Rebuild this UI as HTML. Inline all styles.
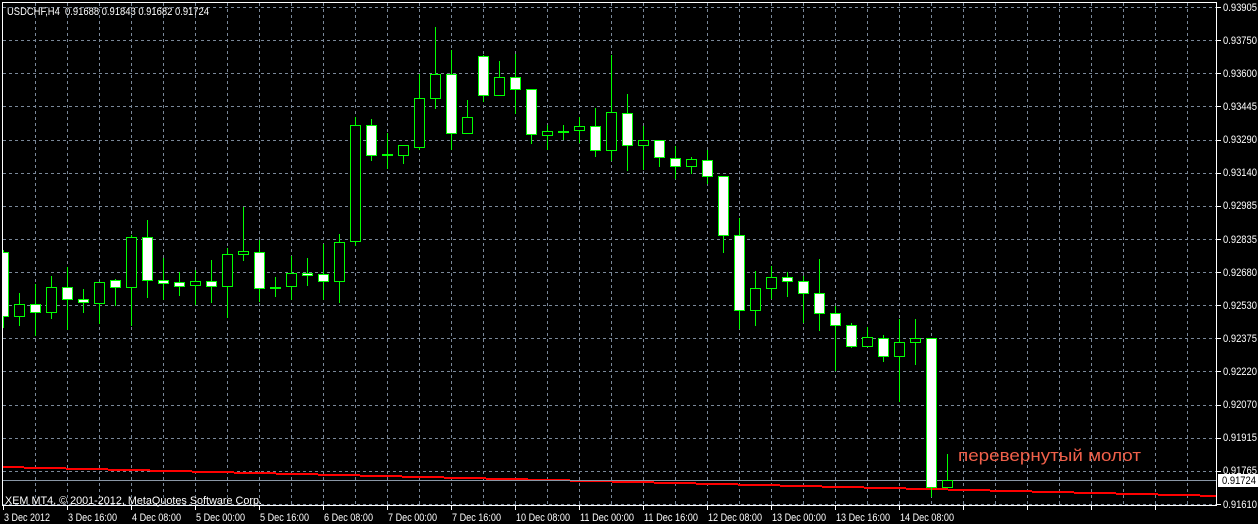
<!DOCTYPE html>
<html><head><meta charset="utf-8">
<style>
html,body{margin:0;padding:0;background:#000;}
body{width:1258px;height:524px;overflow:hidden;}
svg{display:block;}
text{font-family:"Liberation Sans",Arial,sans-serif;}
</style></head>
<body>
<svg id="s" width="1258" height="524" xmlns="http://www.w3.org/2000/svg" shape-rendering="crispEdges">
<rect width="1258" height="524" fill="#000"/>
<g id="grid" stroke="#7a8899" stroke-width="1" stroke-dasharray="3,3"></g>
<g id="red" stroke="#ff0000" stroke-width="2" fill="none"></g>
<line x1="2" y1="480.5" x2="1217" y2="480.5" stroke="#8a97a6" stroke-width="1"/>
<g id="candles"></g>
<rect x="2.5" y="2.5" width="1214" height="503" fill="none" stroke="#fff" stroke-width="1"/>
<g id="ticks" stroke="#fff" stroke-width="1"></g>
<rect x="1218" y="474" width="40" height="13" fill="#fff"/>
<g font-size="11" fill="#fff" lengthAdjust="spacingAndGlyphs">
<text x="7" y="15" textLength="202" lengthAdjust="spacingAndGlyphs">USDCHF,H4&#160;&#160;0.91688 0.91843 0.91682 0.91724</text>
<text x="5" y="504" textLength="257" lengthAdjust="spacingAndGlyphs">XEM MT4, © 2001-2012, MetaQuotes Software Corp.</text>
</g>
<g id="prices" font-size="11" fill="#fff">
<text x="1223" y="11">0.93905</text>
<text x="1223" y="44">0.93750</text>
<text x="1223" y="77">0.93600</text>
<text x="1223" y="110">0.93445</text>
<text x="1223" y="143">0.93290</text>
<text x="1223" y="176">0.93140</text>
<text x="1223" y="209">0.92985</text>
<text x="1223" y="243">0.92835</text>
<text x="1223" y="276">0.92680</text>
<text x="1223" y="309">0.92530</text>
<text x="1223" y="342">0.92375</text>
<text x="1223" y="375">0.92220</text>
<text x="1223" y="408">0.92070</text>
<text x="1223" y="441">0.91915</text>
<text x="1223" y="474">0.91765</text>
<text x="1223" y="508">0.91610</text>
<text x="1222" y="484" fill="#000">0.91724</text>
</g>
<g id="dates" font-size="11" fill="#fff">
<text x="4" y="521">3 Dec 2012</text>
<text x="68" y="521">3 Dec 16:00</text>
<text x="132" y="521">4 Dec 08:00</text>
<text x="196" y="521">5 Dec 00:00</text>
<text x="260" y="521">5 Dec 16:00</text>
<text x="324" y="521">6 Dec 08:00</text>
<text x="388" y="521">7 Dec 00:00</text>
<text x="452" y="521">7 Dec 16:00</text>
<text x="516" y="521">10 Dec 08:00</text>
<text x="580" y="521">11 Dec 00:00</text>
<text x="644" y="521">11 Dec 16:00</text>
<text x="708" y="521">12 Dec 08:00</text>
<text x="772" y="521">13 Dec 00:00</text>
<text x="836" y="521">13 Dec 16:00</text>
<text x="900" y="521">14 Dec 08:00</text>
</g>
<text x="958" y="461" font-size="17" fill="#f0604a" textLength="183" lengthAdjust="spacingAndGlyphs">перевернутый молот</text>
</svg>
<script>
var NS="http://www.w3.org/2000/svg";
function el(p,n,a){var e=document.createElementNS(NS,n);for(var k in a)e.setAttribute(k,a[k]);p.appendChild(e);return e;}
var ps=document.getElementById("prices").children;
for(var i=0;i<ps.length;i++){ps[i].setAttribute("textLength","34");ps[i].setAttribute("lengthAdjust","spacingAndGlyphs");}
var ds=document.getElementById("dates").children;
for(var i=0;i<ds.length;i++){var L=ds[i].textContent.length;ds[i].setAttribute("textLength",L>=12?"54":(L==11?"49":"46"));ds[i].setAttribute("lengthAdjust","spacingAndGlyphs");}
var g=document.getElementById("grid");
for(var k=0;k<16;k++){var y=Math.round(7+k*33.13)+0.5;el(g,"line",{x1:3,y1:y,x2:1216,y2:y});}
for(var x=35;x<1216;x+=32){el(g,"line",{x1:x+0.5,y1:3,x2:x+0.5,y2:505});}
var t=document.getElementById("ticks");
for(var k=0;k<16;k++){var y=Math.round(7+k*33.13)+0.5;el(t,"line",{x1:1217,y1:y,x2:1221,y2:y});}
for(var x=3;x<1216;x+=64){el(t,"line",{x1:x+0.5,y1:506,x2:x+0.5,y2:510});}
var r=document.getElementById("red");
var d="";var xs=3,k=0;
while(xs<1216){var xe=Math.min(24+42*k,1216);var y=467+k;d+="M"+xs+" "+y+"H"+xe;xs=xe;k++;}
el(r,"path",{d:d});
var C=[
[250,252,316,327,1],[293,304,316,325,0],[284,304,312,335,1],[276,287,312,318,0],
[267,287,299,329,1],[289,299,302,312,1],[282,282,303,323,0],[279,280,287,305,1],
[235,237,287,325,0],[220,237,280,297,1],[258,280,283,299,1],[272,282,286,295,1],
[270,281,285,304,0],[260,281,286,302,1],[248,254,286,317,0],[207,251,254,260,0],
[240,252,288,301,1],[277,287,288,296,0],[256,273,286,299,0],[258,273,275,285,1],
[244,274,281,299,1],[234,242,281,302,0],[117,125,241,245,0],[119,125,155,160,1],
[133,154,155,168,0],[145,145,155,163,0],[74,98,147,149,0],[27,74,98,108,0],
[50,74,133,149,1],[100,117,133,133,0],[55,56,95,101,1],[61,77,95,95,0],
[54,77,89,113,1],[89,89,134,143,1],[125,131,135,149,0],[125,131,132,139,0],
[117,126,130,142,0],[108,126,150,156,1],[55,112,150,160,0],[94,113,145,170,1],
[126,140,145,169,0],[140,140,157,166,1],[146,158,166,178,1],[157,159,166,173,0],
[150,160,176,183,1],[176,176,235,252,1],[218,235,310,328,1],[271,288,310,325,0],
[266,277,288,298,0],[272,277,281,296,1],[276,281,293,322,1],[259,293,313,330,1],
[306,313,325,370,1],[323,325,346,347,1],[327,337,346,346,0],[335,338,356,361,1],
[319,342,356,401,0],[319,338,342,364,0],[338,338,487,496,1],[454,480,487,487,0]
];
var cg=document.getElementById("candles");
for(var i=0;i<C.length;i++){
 var c=C[i],cx=3+16*i;
 el(cg,"line",{x1:cx+0.5,y1:c[0],x2:cx+0.5,y2:c[3]+1,stroke:"#00ff00","stroke-width":1});
 var h=Math.max(c[2]-c[1],1);
 if(c[2]-c[1]<=1){el(cg,"rect",{x:cx-5,y:c[1],width:11,height:2,fill:"#00ff00"});}
 else el(cg,"rect",{x:cx-4.5,y:c[1]+0.5,width:10,height:h,fill:c[4]?"#fff":"#000",stroke:"#00ff00","stroke-width":1});
}
el(cg,"rect",{x:0,y:0,width:2,height:524,fill:"#000"});
</script>
</body></html>
